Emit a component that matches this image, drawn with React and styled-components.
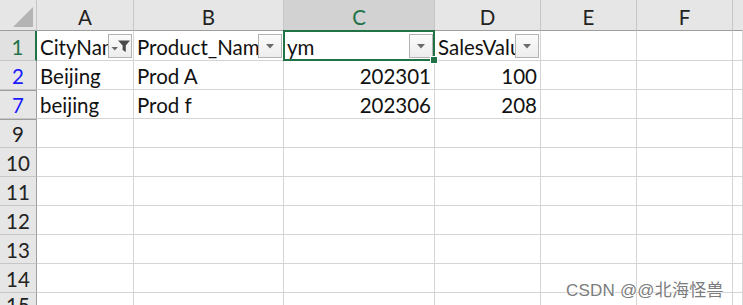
import React from "react";
import styled, { createGlobalStyle } from "styled-components";

const Global = createGlobalStyle`
  html, body { margin: 0; padding: 0; background: #ffffff; }
  body { font-family: Lato, "Liberation Sans", sans-serif; overflow: hidden; }
`;

const GREEN = "#217346";

const Sheet = styled.div`
  position: relative;
  width: 743px;
  height: 305px;
  overflow: hidden;
  display: grid;
  grid-template-columns: 37px 97px 150px 151px 106px 96px 96px 1fr;
  grid-template-rows: 31px 30px repeat(8, 29px) 1fr;
  font-family: Lato, "Liberation Sans", sans-serif;
  font-size: 20.5px;
  color: #111;
`;

const Corner = styled.div`
  background: #e6e6e6;
  border-right: 1px solid #c6c6c6;
  border-bottom: 1px solid #9e9e9e;
  box-sizing: border-box;
  position: relative;
  display: flex;
  align-items: flex-end;
  justify-content: flex-end;
  padding: 0 3px 3px 0;
`;

const ColHead = styled.div`
  box-sizing: border-box;
  background: ${(p) => (p.$active ? "#d2d2d2" : "#e6e6e6")};
  color: ${(p) => (p.$active ? GREEN : "#222")};
  border-right: 1px solid ${(p) => (p.$last ? "transparent" : "#c6c6c6")};
  border-bottom: 1px solid #9e9e9e;
  display: flex;
  align-items: flex-end;
  justify-content: center;
  line-height: 24px;
  padding-bottom: 1px;
`;

const RowHead = styled.div`
  box-sizing: border-box;
  background: ${(p) => (p.$active ? "#e1e1e1" : "#e6e6e6")};
  color: ${(p) => p.$color || "#222"};
  border-right: ${(p) => (p.$active ? `2px solid ${GREEN}` : "1px solid #9e9e9e")};
  border-bottom: 1px solid #c6c6c6;
  border-top: ${(p) => (p.$hiddenBefore ? "1px solid #9e9e9e" : "0")};
  display: flex;
  align-items: flex-end;
  justify-content: center;
  line-height: 24px;
  padding-bottom: 1px;
`;

const Cell = styled.div`
  box-sizing: border-box;
  position: relative;
  border-right: 1px solid #d4d4d4;
  border-bottom: 1px solid #d4d4d4;
  display: flex;
  align-items: flex-end;
  justify-content: ${(p) => (p.$num ? "flex-end" : "flex-start")};
  padding: 0 3px 1px 3px;
  line-height: 24px;
  white-space: nowrap;
  overflow: ${(p) => (p.$selected ? "visible" : "hidden")};
`;

const Clip = styled.span`
  overflow: hidden;
  white-space: nowrap;
`;

const FilterBtn = styled.div`
  position: absolute;
  right: 1px;
  top: 3px;
  width: 24px;
  height: 24px;
  box-sizing: border-box;
  border: 1px solid #b2b2b2;
  background: linear-gradient(#fbfbfb, #ededed);
  display: flex;
  align-items: center;
  justify-content: center;
`;

const Selection = styled.div`
  position: absolute;
  left: -1px;
  top: -1px;
  right: -1px;
  bottom: -1px;
  border: 2px solid ${GREEN};
  pointer-events: none;
  z-index: 2;
`;

const Handle = styled.div`
  position: absolute;
  right: -4px;
  bottom: -4px;
  width: 6px;
  height: 6px;
  background: ${GREEN};
  border: 1px solid #fff;
  z-index: 3;
`;

const Watermark = styled.div`
  position: absolute;
  left: 566px;
  top: 276px;
  font-family: "Liberation Sans", "Noto Sans CJK SC", sans-serif;
  font-size: 17px;
  color: #7c7c7c;
  letter-spacing: 0.2px;
  text-shadow: 0 0 2px #fff, 0 0 2px #fff, 0 0 1px #fff;
  white-space: nowrap;
  z-index: 5;
`;

const Arrow = () => (
  <svg width="22" height="22" viewBox="0 0 22 22">
    <path d="M7 9 H15 L11 13.5 Z" fill="#6a6a6a" />
  </svg>
);

const Funnel = () => (
  <svg width="22" height="22" viewBox="0 0 22 22">
    <path d="M9 5.5 H21 L16.8 10.5 V17 L13.6 15 V10.5 Z" fill="#4a4a4a" />
    <path d="M2.5 12 H9 L5.75 15.5 Z" fill="#6a6a6a" />
  </svg>
);

const CornerTri = () => (
  <svg width="20" height="20" viewBox="0 0 20 20">
    <path d="M20 0 V20 H0 Z" fill="#b4b4b4" />
  </svg>
);

const cols = ["A", "B", "C", "D", "E", "F", ""];

const empty = ["", "", "", "", "", "", ""];
const rows = [
  { n: "1", color: GREEN, active: true, cells: ["CityName", "Product_Name", "ym", "SalesValue", "", "", ""], header: true },
  { n: "2", color: "#1a1aff", cells: ["Beijing", "Prod A", "202301", "100", "", "", ""] },
  { n: "7", color: "#1a1aff", hiddenBefore: true, cells: ["beijing", "Prod f", "202306", "208", "", "", ""] },
  { n: "9", hiddenBefore: true, cells: empty },
  { n: "10", cells: empty },
  { n: "11", cells: empty },
  { n: "12", cells: empty },
  { n: "13", cells: empty },
  { n: "14", cells: empty },
  { n: "15", cells: empty },
];

const numericCols = [2, 3];

export default function App() {
  return (
    <>
      <Global />
      <Sheet>
        <Corner>
          <CornerTri />
        </Corner>
        {cols.map((c, i) => (
          <ColHead key={i} $active={c === "C"} $last={i === cols.length - 1}>
            {c}
          </ColHead>
        ))}
        {rows.map((r) => (
          <React.Fragment key={r.n}>
            <RowHead $color={r.color} $active={r.active} $hiddenBefore={r.hiddenBefore}>
              {r.n}
            </RowHead>
            {r.cells.map((v, ci) => {
              const selected = r.header && ci === 2;
              return (
                <Cell key={ci} $num={!r.header && numericCols.includes(ci)} $selected={selected}>
                  <Clip>{v}</Clip>
                  {r.header && ci < 4 && (
                    <FilterBtn>{ci === 0 ? <Funnel /> : <Arrow />}</FilterBtn>
                  )}
                  {selected && (
                    <>
                      <Selection />
                      <Handle />
                    </>
                  )}
                </Cell>
              );
            })}
          </React.Fragment>
        ))}
        <Watermark>CSDN @@北海怪兽</Watermark>
      </Sheet>
    </>
  );
}
